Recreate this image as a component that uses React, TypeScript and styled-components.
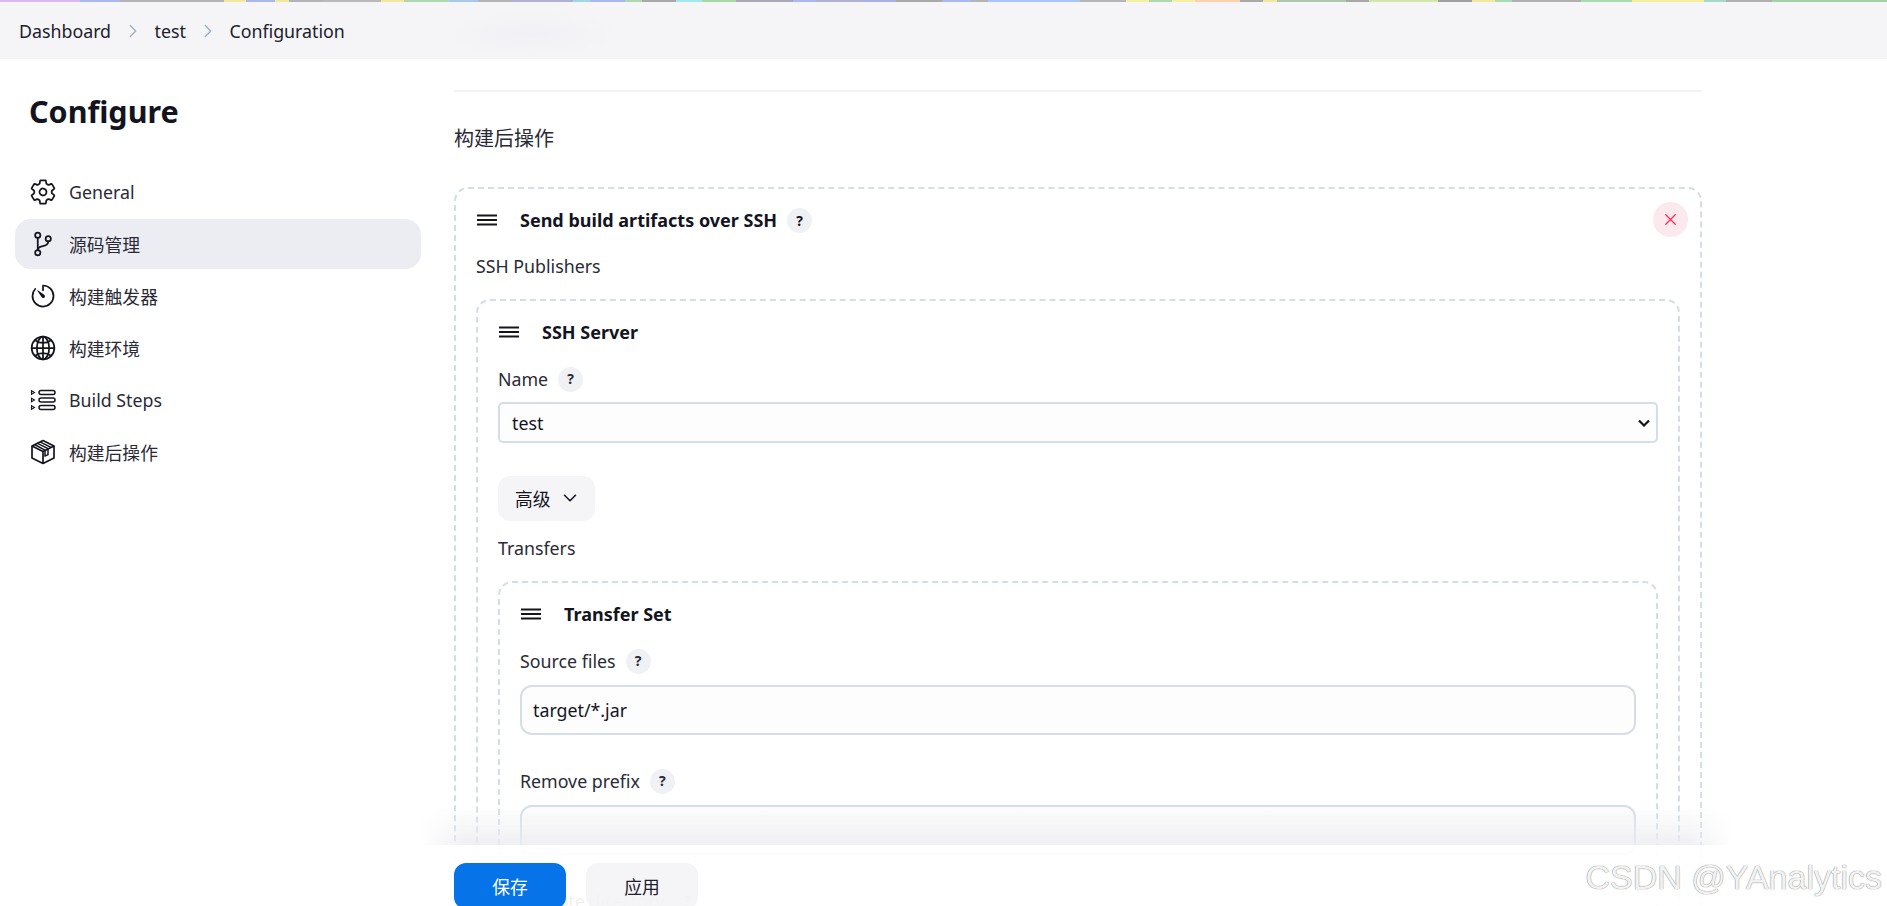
import styled, { createGlobalStyle } from 'styled-components';
import { ChevronDown, ChevronRight, X } from 'lucide-react';
import { IoGitBranchOutline, IoGlobeOutline, IoSettingsOutline, IoTimerOutline } from 'react-icons/io5';

const GlobalStyle = createGlobalStyle`
  html, body {
    margin: 0;
    padding: 0;
    height: 100%;
    overflow: hidden;
    background: #fff;
  }
  * {
    box-sizing: border-box;
  }
`;

// top edge of the window, width + colour of each run
const stripRuns: [number, string][] = [
  [70, '#d9b8f5'], [35, '#a9b8f0'], [90, '#b4b4b8'], [20, '#f3e79b'], [25, '#a9b8f0'], [12, '#f3e79b'],
  [30, '#b4b4b8'], [50, '#b8b8b8'], [20, '#f3e79b'], [40, '#b0d8b0'], [25, '#a8c8f0'], [30, '#b4b4b8'],
  [53, '#b0b0d8'], [15, '#9ed8e8'], [30, '#a9b8f0'], [15, '#b0d8b0'], [30, '#a8a8a8'], [22, '#a0e8f0'],
  [30, '#a8d8a8'], [50, '#a8a8b8'], [20, '#a9b8f0'], [40, '#b0b0d8'], [30, '#a8b0e8'], [40, '#a8a8a8'],
  [25, '#a9b8f0'], [15, '#b4b4b8'], [80, '#a9c4ff'], [40, '#b5b5b5'], [20, '#f7f0a0'], [20, '#b0d8b0'],
  [20, '#f7f0a0'], [40, '#ffcfae'], [20, '#a8a8a8'], [12, '#f3e79b'], [60, '#b0c8b0'], [20, '#a8a8a8'],
  [60, '#d0e8a8'], [30, '#a0a0a0'], [20, '#f3e79b'], [15, '#a8dcb0'], [60, '#b0b0b0'], [45, '#a8dcb0'],
  [12, '#f7f09a'], [50, '#f7f09a'], [20, '#a8d8c8'], [40, '#b0b0b0'], [100, '#a8d0a8'],
];

const navItems = [
  { label: 'General', icon: 'gear' },
  { label: '源码管理', icon: 'branch', active: true },
  { label: '构建触发器', icon: 'timer' },
  { label: '构建环境', icon: 'globe' },
  { label: 'Build Steps', icon: 'steps' },
  { label: '构建后操作', icon: 'package' },
];

const StepsIcon = () => (
  <svg width="28" height="28" viewBox="0 0 28 28" fill="none" stroke="#14141f" strokeWidth="1.5">
    <rect x="10" y="4.5" width="16" height="4" rx="2" />
    <rect x="10" y="12" width="16" height="4" rx="2" />
    <rect x="10" y="19.5" width="16" height="4" rx="2" />
    <path d="M2.5 4.7l3 1.8-3 1.8zM2.5 12.2l3 1.8-3 1.8zM2.5 19.7l3 1.8-3 1.8z" strokeWidth="1.1" />
  </svg>
);

const PackageIcon = () => (
  <svg width="28" height="28" viewBox="0 0 28 28" fill="none" stroke="#14141f" strokeWidth="1.7" strokeLinejoin="round">
    <path d="M14 2.5l11 5.5v12L14 25.5 3 20V8z" />
    <path d="M3 8l11 5.5L25 8M14 13.5v12" />
    <path d="M8 5.2l11 5.5v6l-3 1.5v-6L5.5 6.5M11 3.9l11 5.5" strokeWidth="1.5" />
  </svg>
);

const NavIcon = ({ name }: { name: string }) => {
  if (name === 'gear') return <IoSettingsOutline size={28} />;
  if (name === 'branch') return <IoGitBranchOutline size={28} />;
  if (name === 'timer') return <IoTimerOutline size={28} />;
  if (name === 'globe') return <IoGlobeOutline size={28} />;
  if (name === 'steps') return <StepsIcon />;
  return <PackageIcon />;
};

const Grip = () => (
  <GripIcon width="20" height="12" viewBox="0 0 20 12" fill="none" stroke="#14141f" strokeWidth="1.8">
    <path d="M0 1.5h20M0 6h20M0 10.5h20" />
  </GripIcon>
);

const App = () => {
  return (
    <Page>
      <GlobalStyle />
      <Strip>
        {stripRuns.map(([width, color], i) => (
          <StripCell key={i} $width={width} $color={color} />
        ))}
      </Strip>
      <TopBar>
        <Crumb>Dashboard</Crumb>
        <CrumbSep>
          <ChevronRight size={22} strokeWidth={1.5} />
        </CrumbSep>
        <Crumb>test</Crumb>
        <CrumbSep>
          <ChevronRight size={22} strokeWidth={1.5} />
        </CrumbSep>
        <Crumb>Configuration</Crumb>
      </TopBar>
      <Body>
        <Sidebar>
          <Title>Configure</Title>
          <Nav>
            {navItems.map((item) => (
              <NavItem key={item.label} $active={!!item.active}>
                <NavIcon name={item.icon} />
                <span>{item.label}</span>
              </NavItem>
            ))}
          </Nav>
        </Sidebar>
        <Main>
          <Rule />
          <SectionTitle>构建后操作</SectionTitle>
          <Outer>
            <CloseButton>
              <X size={19} strokeWidth={1.6} />
            </CloseButton>
            <BlockHead>
              <Grip />
              <BlockTitle>Send build artifacts over SSH</BlockTitle>
              <Help>?</Help>
            </BlockHead>
            <PlainLabel $top="15px">SSH Publishers</PlainLabel>
            <Inner>
              <BlockHead>
                <Grip />
                <BlockTitle>SSH Server</BlockTitle>
              </BlockHead>
              <FieldLabel>
                Name <Help>?</Help>
              </FieldLabel>
              <SelectBox>
                <span>test</span>
                <SelectArrow viewBox="0 0 12 8" width="12" height="8" fill="none" stroke="#14141f" strokeWidth="2.2">
                  <path d="M1 1.5l5 5 5-5" />
                </SelectArrow>
              </SelectBox>
              <AdvancedButton>
                高级 <ChevronDown size={22} strokeWidth={1.7} />
              </AdvancedButton>
              <PlainLabel $top="14px">Transfers</PlainLabel>
              <Inner>
                <BlockHead>
                  <Grip />
                  <BlockTitle>Transfer Set</BlockTitle>
                </BlockHead>
                <FieldLabel>
                  Source files <Help>?</Help>
                </FieldLabel>
                <TextField>target/*.jar</TextField>
                <FieldLabel $spaced>
                  Remove prefix <Help>?</Help>
                </FieldLabel>
                <TextField />
                <FieldLabel $spaced>
                  Remote directory <Help>?</Help>
                </FieldLabel>
                <TextField />
              </Inner>
            </Inner>
          </Outer>
        </Main>
      </Body>
      <BottomBar>
        <SaveButton>保存</SaveButton>
        <ApplyButton>应用</ApplyButton>
      </BottomBar>
      <Watermark>CSDN @YAnalytics</Watermark>
    </Page>
  );
};

const Page = styled.div`
  position: relative;
  width: 1887px;
  height: 906px;
  overflow: hidden;
  color: #14141f;
  font-family: 'Noto Sans', 'Noto Sans CJK SC', sans-serif;
  font-size: 17.8px;
`;
const Strip = styled.div`
  display: flex;
  height: 2px;
`;
const StripCell = styled.div<{ $width: number; $color: string }>`
  flex: ${(props) => props.$width};
  background: ${(props) => props.$color};
`;
const TopBar = styled.div`
  display: flex;
  align-items: center;
  height: 57px;
  padding-left: 19px;
  background: radial-gradient(ellipse 90px 24px at 530px 32px, #f1f1f5, rgba(241, 241, 245, 0)), #f5f5f8;
`;
const Crumb = styled.span`
  color: #20202c;
`;
const CrumbSep = styled.span`
  display: flex;
  width: 43.5px;
  justify-content: center;
  color: #9db0c6;
`;
const Body = styled.div`
  display: flex;
`;
const Sidebar = styled.div`
  width: 454px;
  flex-shrink: 0;
  padding: 27px 33px 0 15px;
`;
const Title = styled.div`
  padding-left: 14px;
  font-size: 30.5px;
  font-weight: 700;
  line-height: 50px;
`;
const Nav = styled.div`
  display: flex;
  flex-direction: column;
  gap: 2px;
  margin-top: 31px;
`;
const NavItem = styled.div<{ $active: boolean }>`
  display: flex;
  align-items: center;
  gap: 12px;
  height: 50px;
  padding-left: 14px;
  border-radius: 16px;
  color: #2a2a36;
  background: ${(props) => (props.$active ? '#ecedf3' : 'transparent')};
  svg {
    color: #14141f;
    flex-shrink: 0;
  }
`;
const Main = styled.div`
  width: 1248px;
`;
const Rule = styled.div`
  height: 2px;
  margin-top: 31px;
  background: #f3f3f6;
`;
const SectionTitle = styled.div`
  margin-top: 32px;
  font-size: 20px;
  line-height: 30px;
  color: #2a2a36;
`;
const Outer = styled.div`
  position: relative;
  margin-top: 33px;
  padding: 13px 20px 20px;
  border: 2px dashed #d5dee7;
  border-radius: 14px;
`;
const Inner = styled.div`
  margin-top: 20px;
  padding: 13px 20px 20px;
  border: 2px dashed #d5dee7;
  border-radius: 14px;
`;
const BlockHead = styled.div`
  display: flex;
  align-items: center;
  height: 36px;
  padding-left: 1px;
`;
const GripIcon = styled.svg`
  margin-right: 23px;
  flex-shrink: 0;
`;
const BlockTitle = styled.div`
  font-size: 18px;
  font-weight: 700;
`;
const Help = styled.span`
  display: inline-flex;
  align-items: center;
  justify-content: center;
  width: 25px;
  height: 25px;
  margin-left: 10px;
  border-radius: 50%;
  background: #eff1f5;
  font-size: 14px;
  font-weight: 700;
`;
const CloseButton = styled.div`
  position: absolute;
  top: 13px;
  right: 12px;
  display: flex;
  align-items: center;
  justify-content: center;
  width: 35px;
  height: 35px;
  border-radius: 50%;
  background: #fbe9ee;
  color: #ef2f5a;
`;
const PlainLabel = styled.div<{ $top: string }>`
  margin-top: ${(props) => props.$top};
  line-height: 26px;
  color: #2a2a36;
`;
const FieldLabel = styled.div<{ $spaced?: boolean }>`
  display: flex;
  align-items: center;
  margin-top: ${(props) => (props.$spaced ? '33px' : '16px')};
  line-height: 26px;
  color: #2a2a36;
`;
const SelectBox = styled.div`
  display: flex;
  align-items: center;
  justify-content: space-between;
  height: 41px;
  margin-top: 10px;
  padding: 0 6px 0 12px;
  border: 2px solid #d5dee7;
  border-radius: 5px;
  background: #fdfdfd;
`;
const SelectArrow = styled.svg`
  flex-shrink: 0;
`;
const AdvancedButton = styled.div`
  display: inline-flex;
  align-items: center;
  gap: 8px;
  height: 45px;
  margin-top: 33px;
  padding: 0 14px 2px 17px;
  border-radius: 12px;
  background: #f5f5f8;
  vertical-align: top;
`;
const TextField = styled.div`
  display: flex;
  align-items: center;
  height: 50px;
  margin-top: 11px;
  padding: 0 11px;
  border: 2px solid #d5dee7;
  border-radius: 12px;
  background: #fdfdfd;
`;
const BottomBar = styled.div`
  position: absolute;
  left: 0;
  right: 0;
  bottom: 0;
  display: flex;
  gap: 20px;
  height: 61px;
  padding: 18px 0 0 454px;
  background: rgba(255, 255, 255, 0.93);
  &::before {
    content: '';
    position: absolute;
    left: 420px;
    right: 154px;
    top: -40px;
    height: 40px;
    background: linear-gradient(to bottom, rgba(236, 236, 241, 0), rgba(236, 236, 241, 0.8));
    mask-image: linear-gradient(to right, transparent, #000 45px, #000 calc(100% - 45px), transparent);
  }
`;
const SaveButton = styled.div`
  display: flex;
  align-items: center;
  justify-content: center;
  width: 112px;
  height: 46px;
  border-radius: 12px;
  background: #0674e8;
  color: #fff;
`;
const ApplyButton = styled(SaveButton)`
  background: rgba(243, 243, 246, 0.85);
  color: #20202c;
`;
const Watermark = styled.div`
  position: absolute;
  right: 5px;
  bottom: 9px;
  font-family: 'Liberation Sans', sans-serif;
  font-size: 34px;
  color: #f2f2f2;
  text-shadow: 0 0 1px #8f8f8f, 0 0 1px #8f8f8f;
`;

export default App;
